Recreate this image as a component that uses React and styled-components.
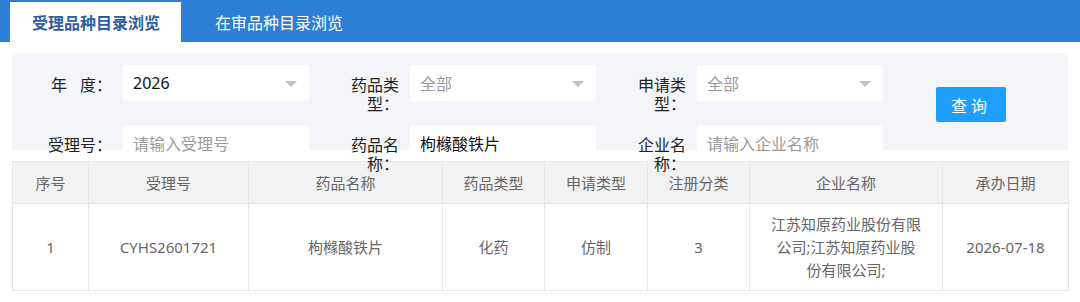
import React from "react";
import styled, { createGlobalStyle } from "styled-components";

const Global = createGlobalStyle`
  html, body { margin: 0; padding: 0; background: #fff; }
  body { font-family: "Noto Sans", "Noto Sans CJK SC", sans-serif; color: #333; }
  * { box-sizing: border-box; }
`;

const TabBar = styled.div`
  height: 42px;
  background: #2b7fd4;
  display: flex;
  align-items: flex-end;
  padding-left: 10px;
  gap: 12px;
`;

const Tab = styled.div`
  height: 40px;
  padding: 0 21px 0 22px;
  display: flex;
  align-items: center;
  font-size: 16px;
  font-weight: ${(p) => (p.$active ? 700 : 400)};
  color: ${(p) => (p.$active ? "#2e5f9c" : "#fff")};
  background: ${(p) => (p.$active ? "#fff" : "transparent")};
  font-family: "Noto Sans CJK SC", sans-serif;
`;

const Content = styled.div`
  padding: 11px 12px 0;
`;

const FilterPanel = styled.div`
  height: 97px;
  background: #f3f5f8;
  padding-top: 12px;
  display: grid;
  grid-template-columns: 297px 247px 247px auto;
  grid-template-rows: 36px 36px;
  column-gap: 40px;
  row-gap: 24px;
`;

const Field = styled.div`
  display: flex;
  align-items: flex-start;
  height: 36px;
`;

const Label = styled.label`
  position: relative;
  z-index: 1;
  width: ${(p) => p.$w}px;
  margin-right: 11px;
  padding-top: 10px;
  line-height: 19px;
  font-size: 16px;
  text-align: right;
  color: #222;
  font-family: "Noto Sans CJK SC", sans-serif;
  flex-shrink: 0;
`;

const Gap = styled.span`
  display: inline-block;
  width: 13px;
`;

const Control = styled.div`
  position: relative;
  width: 186px;
  height: 36px;
  background: #fff;
  border-radius: 2px;
  display: flex;
  align-items: center;
  padding-left: 10px;
  font-size: 16px;
  color: ${(p) => (p.$placeholder ? "#9a9a9a" : "#111")};
  font-family: "Noto Sans", "Noto Sans CJK SC", sans-serif;
`;

const Arrow = styled.span`
  position: absolute;
  right: 12px;
  top: 16px;
  width: 0;
  height: 0;
  border-left: 6px solid transparent;
  border-right: 6px solid transparent;
  border-top: 6px solid #c2c2c2;
`;

const QueryButton = styled.button`
  grid-column: 4;
  grid-row: 1 / span 2;
  align-self: start;
  margin-top: 22px;
  margin-left: 13px;
  width: 70px;
  height: 35px;
  border: none;
  border-radius: 2px;
  background: #1e9fff;
  color: #fff;
  font-size: 16px;
  letter-spacing: 4px;
  padding-left: 6px;
  font-family: "Noto Sans CJK SC", sans-serif;
`;

const Table = styled.table`
  margin-top: 11px;
  width: 1056px;
  border-collapse: collapse;
  table-layout: fixed;
  font-size: 15px;
  color: #666;
  font-family: "Noto Sans", "Noto Sans CJK SC", sans-serif;
`;

const Th = styled.th`
  height: 42px;
  background: #f2f2f2;
  border: 1px solid #e6e6e6;
  font-weight: 400;
  text-align: center;
  padding: 0 10px;
`;

const Td = styled.td`
  height: 87px;
  border: 1px solid #e6e6e6;
  text-align: center;
  padding: 8px 20px;
  line-height: 23px;
  background: #fff;
  font-size: 15px;
`;

const columns = [
  { title: "序号", w: 76 },
  { title: "受理号", w: 160 },
  { title: "药品名称", w: 194 },
  { title: "药品类型", w: 102 },
  { title: "申请类型", w: 103 },
  { title: "注册分类", w: 102 },
  { title: "企业名称", w: 193 },
  { title: "承办日期", w: 126 },
];

const row = [
  "1",
  "CYHS2601721",
  "枸橼酸铁片",
  "化药",
  "仿制",
  "3",
  "江苏知原药业股份有限公司;江苏知原药业股份有限公司;",
  "2026-07-18",
];

function SelectBox({ value, placeholder }) {
  return (
    <Control $placeholder={placeholder}>
      {value}
      <Arrow />
    </Control>
  );
}

export default function App() {
  return (
    <>
      <Global />
      <TabBar>
        <Tab $active>受理品种目录浏览</Tab>
        <Tab>在审品种目录浏览</Tab>
      </TabBar>
      <Content>
        <FilterPanel>
          <Field>
            <Label $w={100}>
              年<Gap />度：
            </Label>
            <SelectBox value="2026" />
          </Field>
          <Field>
            <Label $w={50}>药品类型：</Label>
            <SelectBox value="全部" placeholder />
          </Field>
          <Field>
            <Label $w={50}>申请类型：</Label>
            <SelectBox value="全部" placeholder />
          </Field>
          <QueryButton>查询</QueryButton>
          <Field>
            <Label $w={100}>受理号：</Label>
            <Control $placeholder>请输入受理号</Control>
          </Field>
          <Field>
            <Label $w={50}>药品名称：</Label>
            <Control>枸橼酸铁片</Control>
          </Field>
          <Field>
            <Label $w={50}>企业名称：</Label>
            <Control $placeholder>请输入企业名称</Control>
          </Field>
        </FilterPanel>
        <Table>
          <colgroup>
            {columns.map((c) => (
              <col key={c.title} style={{ width: c.w }} />
            ))}
          </colgroup>
          <thead>
            <tr>
              {columns.map((c) => (
                <Th key={c.title}>{c.title}</Th>
              ))}
            </tr>
          </thead>
          <tbody>
            <tr>
              {row.map((v, i) => (
                <Td key={i}>{v}</Td>
              ))}
            </tr>
          </tbody>
        </Table>
      </Content>
    </>
  );
}
